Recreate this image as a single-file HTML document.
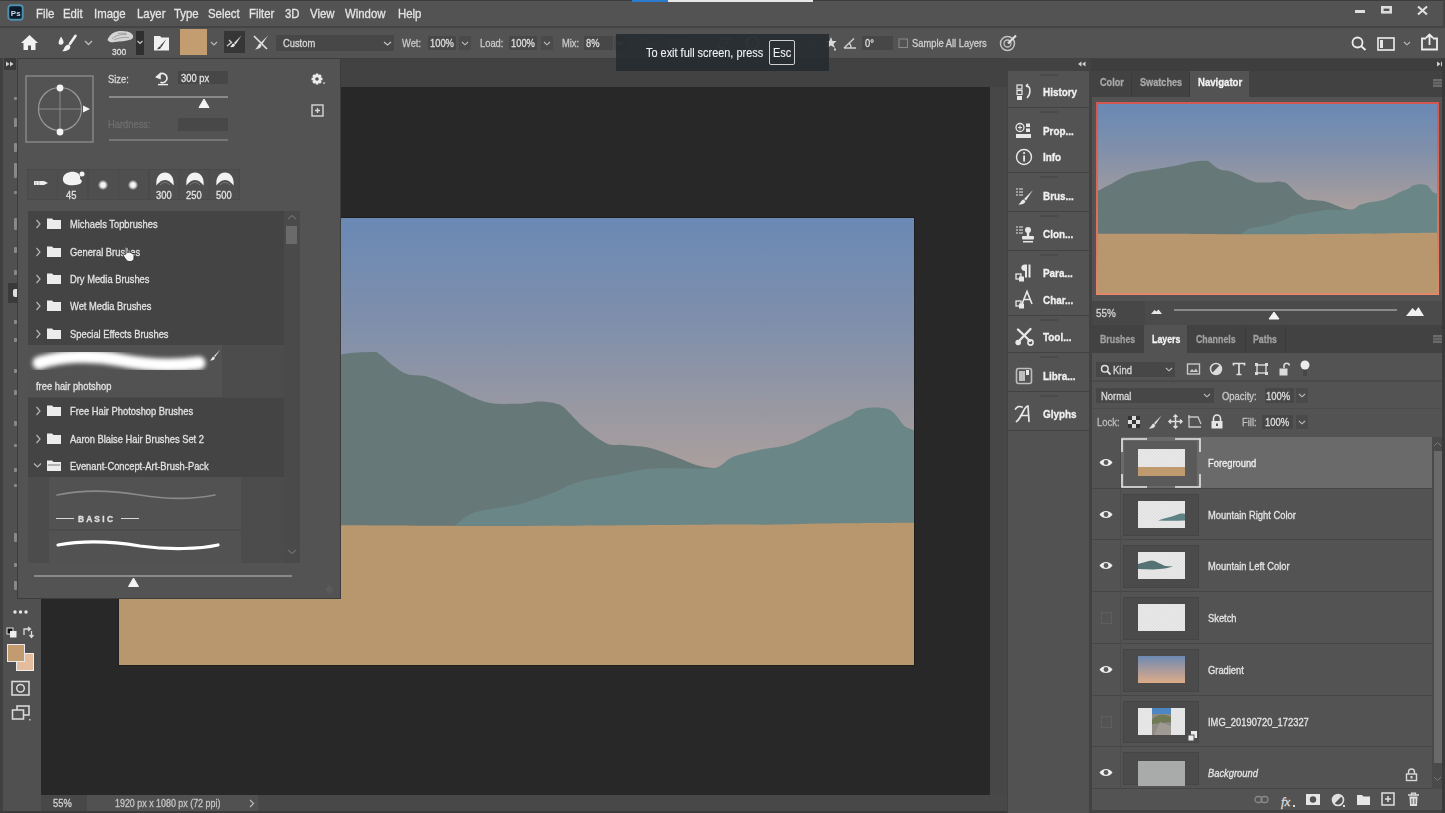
<!DOCTYPE html>
<html><head><meta charset="utf-8">
<style>
*{margin:0;padding:0;box-sizing:border-box}
html,body{width:1445px;height:813px;overflow:hidden;background:#535353;font-family:"Liberation Sans",sans-serif;color:#dcdcdc}
.a{position:absolute}
.t{position:absolute;white-space:nowrap;line-height:1;transform-origin:0 0;-webkit-text-stroke:0.3px currentColor}
svg{position:absolute;overflow:visible}
</style></head><body>
<div class="a" style="left:0px;top:0px;width:1445px;height:27px;background:#535353;"></div>
<div class="a" style="left:0px;top:0px;width:1445px;height:1px;background:#3c3c3c;"></div>
<div class="a" style="left:1443px;top:0px;width:2px;height:58px;background:#444444;"></div>
<div class="a" style="left:0px;top:26px;width:1445px;height:2px;background:#444444;"></div>
<div class="a" style="left:632px;top:0px;width:36px;height:2px;background:#2a7bd0;"></div>
<div class="a" style="left:668px;top:0px;width:145px;height:2px;background:#e8e8e8;"></div>
<div class="a" style="left:0px;top:28px;width:1445px;height:30px;background:#535353;"></div>
<div class="a" style="left:0px;top:58px;width:1445px;height:1px;background:#3e3e3e;"></div>
<div class="a" style="left:0px;top:58px;width:41px;height:755px;background:#535353;"></div>
<div class="a" style="left:0px;top:58px;width:3px;height:755px;background:#404040;"></div>
<div class="a" style="left:3px;top:58px;width:38px;height:755px;background:#505050;"></div>
<div class="a" style="left:41px;top:59px;width:966px;height:28px;background:#424242;"></div>
<div class="a" style="left:41px;top:87px;width:949px;height:708px;background:#282828;"></div>
<div class="a" style="left:990px;top:87px;width:17px;height:708px;background:#474747;"></div>
<div class="a" style="left:41px;top:795px;width:966px;height:16px;background:#484848;"></div>
<div class="a" style="left:87px;top:795px;width:171px;height:16px;background:#515151;"></div>
<div class="a" style="left:0px;top:811px;width:1445px;height:2px;background:#3a3a3a;"></div>
<svg style="left:0;top:0" width="1445" height="813" viewBox="0 0 1445 813">
<defs>
<linearGradient id="sky" x1="0" y1="0" x2="0" y2="1">
<stop offset="0" stop-color="#6a89b5"/>
<stop offset="0.35" stop-color="#7f8fab"/>
<stop offset="0.6" stop-color="#9597a3"/>
<stop offset="0.83" stop-color="#aa9f9d"/>
<stop offset="1" stop-color="#b4a49a"/>
</linearGradient>
<g id="art">
<rect x="119" y="218" width="795" height="300" fill="url(#sky)"/>
<path d="M119.0 423.0 C124.2 420.3 136.7 413.8 150.0 407.0 C163.3 400.2 180.7 388.0 199.0 382.0 C217.3 376.0 241.7 374.3 260.0 371.0 C278.3 367.7 295.5 364.8 309.0 362.0 C322.5 359.2 330.6 356.0 341.0 354.4 C351.4 352.8 365.0 352.1 371.5 352.1 C378.0 352.1 376.1 352.1 379.8 354.4 C383.5 356.7 389.1 362.7 393.7 366.0 C398.3 369.3 402.0 372.6 407.5 374.3 C413.0 376.1 420.0 374.6 426.9 376.5 C433.8 378.4 441.1 381.8 449.0 385.4 C456.9 388.9 466.6 394.8 474.0 397.8 C481.4 400.8 485.0 402.5 493.3 403.4 C501.6 404.3 515.9 403.7 523.8 403.4 C531.6 403.1 534.4 401.2 540.4 401.4 C546.4 401.6 554.7 402.5 559.8 404.7 C564.9 406.9 566.6 410.5 570.8 414.4 C574.9 418.3 578.7 423.4 584.7 428.3 C590.7 433.2 600.3 440.7 606.8 443.5 C613.2 446.3 616.5 444.2 623.4 444.9 C630.3 445.6 640.0 445.8 648.3 447.6 C656.6 449.5 665.0 453.0 673.3 456.0 C681.6 459.0 691.2 463.5 698.2 465.6 C705.2 467.7 712.2 468.0 715.0 468.5 L716 540 L119 540 Z" fill="#667878"/><path d="M454.6 526.0 C457.8 523.8 463.4 516.3 474.0 512.7 C484.6 509.1 505.3 507.6 518.2 504.4 C531.1 501.2 541.4 497.1 551.5 493.3 C561.6 489.5 567.6 484.9 579.1 481.7 C590.6 478.5 608.7 476.2 620.7 474.0 C632.7 471.8 639.6 469.5 651.1 468.6 C662.6 467.7 679.1 468.5 689.9 468.4 C700.7 468.3 709.1 469.4 715.7 467.8 C722.3 466.2 725.5 460.9 729.5 458.7 C733.5 456.5 734.5 456.3 739.4 454.8 C744.3 453.3 751.8 451.4 759.0 449.9 C766.2 448.4 776.1 447.5 782.7 446.0 C789.3 444.5 792.5 443.5 798.4 441.0 C804.3 438.5 812.1 434.1 818.0 431.2 C823.9 428.2 828.6 425.8 833.9 423.3 C839.2 420.8 845.7 418.5 849.6 416.4 C853.5 414.3 853.6 412.0 857.5 410.5 C861.4 409.0 868.0 407.8 873.2 407.6 C878.5 407.4 885.0 408.0 889.0 409.5 C893.0 411.0 894.3 413.6 896.9 416.4 C899.5 419.2 901.9 424.0 904.7 426.3 C907.6 428.6 912.5 429.6 914.0 430.2 L914 540 L454 540 Z" fill="#6b8687"/><path d="M119.0 525.0 C156.0 525.0 273.5 525.0 341.0 525.2 C408.5 525.4 459.0 526.1 523.8 526.0 C588.6 525.9 689.1 524.8 730.0 524.6 C770.9 524.4 751.0 524.9 769.0 524.7 C787.0 524.5 813.6 523.6 837.8 523.3 C862.0 523.0 901.3 522.8 914.0 522.7 L914 665 L119 665 Z" fill="#b8976e"/>
</g>
</defs>
<rect x="118" y="217" width="797" height="449" fill="#1e1e1e"/>
<use href="#art"/>
</svg>
<div class="a" style="left:1007px;top:58px;width:85px;height:755px;background:#424242;"></div>
<div class="a" style="left:1008px;top:71px;width:81px;height:742px;background:#4c4c4c;"></div>
<div class="a" style="left:1091px;top:58px;width:354px;height:755px;background:#424242;"></div>
<div class="a" style="left:1091px;top:59px;width:354px;height:12px;background:#3e3e3e;"></div>
<svg style="left:7px;top:4px;filter:blur(0.25px)" width="17" height="17" viewBox="0 0 17 17"><rect x="1.3" y="1.3" width="14.4" height="14.4" rx="2.8" fill="#0a1a2a" stroke="#4f90ad" stroke-width="1.9"/><text x="3.8" y="12" font-family="Liberation Sans" font-weight="bold" font-size="8" fill="#c6def0">Ps</text></svg>
<div class="t" style="left:35.5px;top:7.92px;font-size:12.8px;color:#e4e4e4;font-weight:normal;transform:scaleX(0.89);">File</div>
<div class="t" style="left:63px;top:7.92px;font-size:12.8px;color:#e4e4e4;font-weight:normal;transform:scaleX(0.89);">Edit</div>
<div class="t" style="left:94px;top:7.92px;font-size:12.8px;color:#e4e4e4;font-weight:normal;transform:scaleX(0.89);">Image</div>
<div class="t" style="left:136.5px;top:7.92px;font-size:12.8px;color:#e4e4e4;font-weight:normal;transform:scaleX(0.89);">Layer</div>
<div class="t" style="left:174px;top:7.92px;font-size:12.8px;color:#e4e4e4;font-weight:normal;transform:scaleX(0.89);">Type</div>
<div class="t" style="left:208px;top:7.92px;font-size:12.8px;color:#e4e4e4;font-weight:normal;transform:scaleX(0.89);">Select</div>
<div class="t" style="left:249px;top:7.92px;font-size:12.8px;color:#e4e4e4;font-weight:normal;transform:scaleX(0.89);">Filter</div>
<div class="t" style="left:285px;top:7.92px;font-size:12.8px;color:#e4e4e4;font-weight:normal;transform:scaleX(0.89);">3D</div>
<div class="t" style="left:310px;top:7.92px;font-size:12.8px;color:#e4e4e4;font-weight:normal;transform:scaleX(0.89);">View</div>
<div class="t" style="left:344.5px;top:7.92px;font-size:12.8px;color:#e4e4e4;font-weight:normal;transform:scaleX(0.89);">Window</div>
<div class="t" style="left:397.5px;top:7.92px;font-size:12.8px;color:#e4e4e4;font-weight:normal;transform:scaleX(0.89);">Help</div>
<div class="a" style="left:1355px;top:10px;width:10px;height:3px;background:#e0e0e0;"></div>
<svg style="left:1381px;top:6px;" width="11" height="8" viewBox="0 0 11 8"><rect x="1.3" y="1.3" width="8.4" height="5" fill="none" stroke="#dcdcdc" stroke-width="2.6"/></svg>
<svg style="left:1416px;top:5px;" width="13" height="11" viewBox="0 0 13 11"><path d="M2 1.5 L11 9.5 M11 1.5 L2 9.5" stroke="#e0e0e0" stroke-width="2.1"/></svg>
<svg style="left:20px;top:34px;" width="20" height="17" viewBox="0 0 20 17"><path d="M1 9 L9.5 1 L18 9 L15.5 9 L15.5 16 L11 16 L11 11.5 L8 11.5 L8 16 L3.5 16 L3.5 9 Z" fill="#f2f2f2"/></svg>
<svg style="left:56px;top:34px;" width="24" height="18" viewBox="0 0 24 18"><path d="M5 2.5 C6.5 5.5 8.5 7.5 7 9.8 C6 11.3 3.3 11.2 2.7 9.5 C2.2 8 3.5 5.5 5 2.5Z" fill="#f0f0f0"/><path d="M19.5 1.8 L14 9.8" stroke="#f0f0f0" stroke-width="2.6" stroke-linecap="round"/><path d="M12.6 10.6 C10 10.6 8.8 13 7.8 15 C7.4 16 6.8 16.8 6.2 17.3 C9.5 17.6 13.5 16.3 14.2 13.5 C14.5 12.3 13.8 11 12.6 10.6Z" fill="#f0f0f0"/></svg>
<svg style="left:84px;top:40px;" width="10" height="6" viewBox="0 0 10 6"><path d="M1 1 L4.5 4.5 L8 1" fill="none" stroke="#bdbdbd" stroke-width="1.3"/></svg>
<svg style="left:106px;top:29px;filter:blur(0.3px)" width="29" height="16" viewBox="0 0 29 16"><path d="M1.5 11 C3 7 6 3.5 11 2.5 C16 1.5 22 2 25.5 4.5 C28 6.5 27.5 9.5 25 10.5 C20 12.5 14 12 9 13 C6 13.5 3 13.5 1.5 11Z" fill="#d4d4d4"/><path d="M6 10 C9 7 14 5 20 5.5 M8 11 C12 9 17 8 23 8.5 M12 4.5 C15 4 18 4 21 5" stroke="#9a9a9a" stroke-width="0.9" fill="none"/></svg>
<div class="t" style="left:112px;top:47.42px;font-size:9.5px;color:#e0e0e0;font-weight:normal;transform:scaleX(0.89);">300</div>
<div class="a" style="left:136px;top:31px;width:8px;height:24px;background:#2f2f2f;"></div>
<svg style="left:137px;top:40px;" width="6" height="5" viewBox="0 0 6 5"><path d="M0.5 1 L3 3.5 L5.5 1" fill="none" stroke="#cfcfcf" stroke-width="1.1"/></svg>
<svg style="left:152px;top:34px;" width="20" height="18" viewBox="0 0 20 18"><path d="M2 2 L8 2 L9.5 3.5 L17 3.5 L17 16.5 L2 16.5Z" fill="#f0f0f0"/><path d="M14.5 5 L8 12 L9.3 13.2Z M7.8 12.5 C6 13 6.5 14.5 4.8 15.2 C7.5 15.5 9.3 14.5 9 13.3Z" fill="#3a3a3a"/></svg>
<div class="a" style="left:180px;top:29px;width:27px;height:26px;background:#c39c70;"></div>
<svg style="left:210px;top:41px;" width="8" height="5" viewBox="0 0 8 5"><path d="M1 1 L4 4 L7 1" fill="none" stroke="#bdbdbd" stroke-width="1.1"/></svg>
<div class="a" style="left:224px;top:31px;width:21px;height:22px;background:#363636;"></div>
<svg style="left:226px;top:34px;" width="18" height="16" viewBox="0 0 18 16"><path d="M15.5 1.5 L8 9 L9.5 10.5Z" fill="#e8e8e8"/><path d="M7.5 9.5 C5.5 10 6 12 4 13 C7 13.5 9 12.5 9 10.8Z" fill="#e8e8e8"/><path d="M1 12 L6 8 M3 6 L6 9" stroke="#d0d0d0" stroke-width="1.3"/></svg>
<svg style="left:252px;top:34px;" width="18" height="18" viewBox="0 0 18 18"><path d="M2 2 L15 15" stroke="#e0e0e0" stroke-width="1.6"/><path d="M16 1.5 L8.5 9 L10 10.5Z" fill="#e0e0e0"/><path d="M8 9.5 C6 10 6.5 12.5 3 15.5 C7.5 15 9.5 13 9.5 11Z" fill="#e0e0e0"/></svg>
<div class="a" style="left:276px;top:35px;width:118px;height:16px;background:#474747;"></div>
<div class="t" style="left:283px;top:38.38px;font-size:10.5px;color:#d8d8d8;font-weight:normal;transform:scaleX(0.89);">Custom</div>
<svg style="left:383px;top:41px;" width="9" height="5" viewBox="0 0 9 5"><path d="M1 1 L4.5 4 L8 1" fill="none" stroke="#c8c8c8" stroke-width="1.1"/></svg>
<div class="t" style="left:402px;top:38.38px;font-size:10.5px;color:#c8c8c8;font-weight:normal;transform:scaleX(0.89);">Wet:</div>
<div class="a" style="left:428px;top:36px;width:28px;height:14px;background:#474747;"></div>
<div class="t" style="left:430px;top:38.38px;font-size:10.5px;color:#dedede;font-weight:normal;transform:scaleX(0.89);">100%</div>
<div class="a" style="left:459px;top:36px;width:12px;height:14px;background:#4a4a4a;"></div>
<svg style="left:461px;top:41px;" width="9" height="5" viewBox="0 0 9 5"><path d="M1 1 L4 3.8 L7 1" fill="none" stroke="#bcbcbc" stroke-width="1.1"/></svg>
<div class="t" style="left:480px;top:38.38px;font-size:10.5px;color:#c8c8c8;font-weight:normal;transform:scaleX(0.89);">Load:</div>
<div class="a" style="left:509px;top:36px;width:28px;height:14px;background:#474747;"></div>
<div class="t" style="left:511px;top:38.38px;font-size:10.5px;color:#dedede;font-weight:normal;transform:scaleX(0.89);">100%</div>
<div class="a" style="left:541px;top:36px;width:12px;height:14px;background:#4a4a4a;"></div>
<svg style="left:543px;top:41px;" width="9" height="5" viewBox="0 0 9 5"><path d="M1 1 L4 3.8 L7 1" fill="none" stroke="#bcbcbc" stroke-width="1.1"/></svg>
<div class="t" style="left:562px;top:38.38px;font-size:10.5px;color:#c8c8c8;font-weight:normal;transform:scaleX(0.89);">Mix:</div>
<div class="a" style="left:584px;top:36px;width:29px;height:14px;background:#474747;"></div>
<div class="t" style="left:586px;top:38.38px;font-size:10.5px;color:#dedede;font-weight:normal;transform:scaleX(0.89);">8%</div>
<div class="a" style="left:614px;top:36px;width:12px;height:14px;background:#4a4a4a;"></div>
<svg style="left:616px;top:41px;" width="9" height="5" viewBox="0 0 9 5"><path d="M1 1 L4 3.8 L7 1" fill="none" stroke="#bcbcbc" stroke-width="1.1"/></svg>
<div class="t" style="left:640px;top:38.38px;font-size:10.5px;color:#6c6c6c;font-weight:normal;transform:scaleX(0.89);">Flow:</div>
<div class="t" style="left:667px;top:38.38px;font-size:10.5px;color:#6c6c6c;font-weight:normal;transform:scaleX(0.89);">100%</div>
<svg style="left:700px;top:41px;" width="9" height="5" viewBox="0 0 9 5"><path d="M1 1 L4 3.8 L7 1" fill="none" stroke="#6a6a6a" stroke-width="1.1"/></svg>
<svg style="left:716px;top:35px;" width="18" height="16" viewBox="0 0 18 16"><path d="M16 2 L8 10 M9 13 C5 14 3 12 2 9 M4 5 C6 3 9 3 11 4" fill="none" stroke="#7a7a7a" stroke-width="2"/></svg>
<svg style="left:744px;top:35px;" width="17" height="16" viewBox="0 0 17 16"><circle cx="8.5" cy="8" r="6" fill="none" stroke="#7a7a7a" stroke-width="2.2"/></svg>
<svg style="left:806px;top:41px;" width="9" height="5" viewBox="0 0 9 5"><path d="M1 1 L4 3.8 L7 1" fill="none" stroke="#6a6a6a" stroke-width="1.1"/></svg>
<svg style="left:824px;top:36px;" width="14" height="16" viewBox="0 0 14 16"><path d="M7 1 L8.5 5 L12.5 5 L9.5 8 L11 12 L7 9.5 L3 12 L4.5 8 L1.5 5 L5.5 5Z" fill="#d8d8d8"/><rect x="10" y="12.5" width="2" height="2" fill="#cfcfcf"/></svg>
<svg style="left:843px;top:37px;" width="15" height="12" viewBox="0 0 15 12"><path d="M1 11 L13 11 M1 11 L11 1.5 M8 11 C8 8.5 7 6.5 5.5 6" fill="none" stroke="#d0d0d0" stroke-width="1.4"/></svg>
<div class="a" style="left:862px;top:36px;width:31px;height:14px;background:#474747;"></div>
<div class="t" style="left:865px;top:38.38px;font-size:10.5px;color:#dedede;font-weight:normal;transform:scaleX(0.89);">0°</div>
<svg style="left:898px;top:38px;" width="11" height="11" viewBox="0 0 11 11"><rect x="1" y="1" width="8.5" height="8.5" fill="none" stroke="#8a8a8a" stroke-width="1"/></svg>
<div class="t" style="left:912px;top:38.38px;font-size:10.5px;color:#cfcfcf;font-weight:normal;transform:scaleX(0.89);">Sample All Layers</div>
<svg style="left:999px;top:34px;" width="19" height="18" viewBox="0 0 19 18"><circle cx="8.5" cy="9.5" r="7" fill="none" stroke="#c4c4c4" stroke-width="1.5"/><circle cx="8.5" cy="9.5" r="3.5" fill="none" stroke="#c4c4c4" stroke-width="1.3"/><path d="M17 1.5 L9 9.5" stroke="#e0e0e0" stroke-width="2.2"/></svg>
<svg style="left:1351px;top:36px;" width="17" height="15" viewBox="0 0 17 15"><circle cx="6.5" cy="6.5" r="5" fill="none" stroke="#ececec" stroke-width="1.8"/><path d="M10 10 L14.5 14" stroke="#ececec" stroke-width="2"/></svg>
<svg style="left:1377px;top:37px;" width="19" height="14" viewBox="0 0 19 14"><rect x="1" y="1" width="16" height="12" fill="none" stroke="#e6e6e6" stroke-width="1.7"/><rect x="3" y="3" width="3" height="8" fill="#e6e6e6"/></svg>
<svg style="left:1403px;top:41px;" width="8" height="5" viewBox="0 0 8 5"><path d="M1 1 L4 3.8 L7 1" fill="none" stroke="#bcbcbc" stroke-width="1.1"/></svg>
<svg style="left:1420px;top:33px;" width="19" height="18" viewBox="0 0 19 18"><path d="M6 5.5 L2 5.5 L2 16.5 L17 16.5 L17 5.5 L13 5.5" fill="none" stroke="#ececec" stroke-width="1.8"/><path d="M9.5 12 L9.5 2 M6 5 L9.5 1.5 L13 5" fill="none" stroke="#ececec" stroke-width="1.8"/></svg>
<div class="a" style="left:616px;top:34px;width:213px;height:37px;background:rgba(38,43,49,0.9);"></div>
<div class="t" style="left:646px;top:46.80px;font-size:12px;color:#f2f2f2;font-weight:normal;transform:scaleX(0.91);-webkit-text-stroke:0.1px #f2f2f2">To exit full screen, press</div>
<div class="a" style="left:769px;top:40px;width:26px;height:25px;background:transparent;border:1px solid #d0d0d0;border-radius:2px"></div>
<div class="t" style="left:773px;top:46.80px;font-size:12px;color:#f2f2f2;font-weight:normal;transform:scaleX(0.91);-webkit-text-stroke:0.1px #f2f2f2">Esc</div>
<div class="a" style="left:4px;top:58px;width:12px;height:12px;background:#3a3a3a;"></div>
<svg style="left:5px;top:61px;" width="10" height="6" viewBox="0 0 10 6"><path d="M1 0.5 L4.5 3 L1 5.5Z M5 0.5 L8.5 3 L5 5.5Z" fill="#d0d0d0"/></svg>
<div class="a" style="left:14px;top:97px;width:2.5px;height:3px;background:#b8b8b8;opacity:.55;border-radius:1px"></div>
<div class="a" style="left:14px;top:118px;width:2.5px;height:9px;background:#b8b8b8;opacity:.55;border-radius:1px"></div>
<div class="a" style="left:14px;top:143px;width:2.5px;height:9px;background:#b8b8b8;opacity:.55;border-radius:1px"></div>
<div class="a" style="left:14px;top:163px;width:2.5px;height:15px;background:#b8b8b8;opacity:.55;border-radius:1px"></div>
<div class="a" style="left:14px;top:191px;width:2.5px;height:3px;background:#b8b8b8;opacity:.55;border-radius:1px"></div>
<div class="a" style="left:14px;top:218px;width:2.5px;height:12px;background:#b8b8b8;opacity:.55;border-radius:1px"></div>
<div class="a" style="left:14px;top:247px;width:2.5px;height:6px;background:#b8b8b8;opacity:.55;border-radius:1px"></div>
<div class="a" style="left:14px;top:270px;width:2.5px;height:5px;background:#b8b8b8;opacity:.55;border-radius:1px"></div>
<div class="a" style="left:14px;top:320px;width:2.5px;height:4px;background:#b8b8b8;opacity:.55;border-radius:1px"></div>
<div class="a" style="left:14px;top:338px;width:2.5px;height:4px;background:#b8b8b8;opacity:.55;border-radius:1px"></div>
<div class="a" style="left:14px;top:369px;width:2.5px;height:4px;background:#b8b8b8;opacity:.55;border-radius:1px"></div>
<div class="a" style="left:14px;top:390px;width:2.5px;height:5px;background:#b8b8b8;opacity:.55;border-radius:1px"></div>
<div class="a" style="left:14px;top:421px;width:2.5px;height:5px;background:#b8b8b8;opacity:.55;border-radius:1px"></div>
<div class="a" style="left:14px;top:444px;width:2.5px;height:3px;background:#b8b8b8;opacity:.55;border-radius:1px"></div>
<div class="a" style="left:14px;top:468px;width:2.5px;height:4px;background:#b8b8b8;opacity:.55;border-radius:1px"></div>
<div class="a" style="left:14px;top:484px;width:2.5px;height:3px;background:#b8b8b8;opacity:.55;border-radius:1px"></div>
<div class="a" style="left:14px;top:533px;width:2.5px;height:9px;background:#b8b8b8;opacity:.55;border-radius:1px"></div>
<div class="a" style="left:14px;top:563px;width:2.5px;height:4px;background:#b8b8b8;opacity:.55;border-radius:1px"></div>
<div class="a" style="left:14px;top:581px;width:2.5px;height:9px;background:#b8b8b8;opacity:.55;border-radius:1px"></div>
<div class="a" style="left:8px;top:283px;width:9px;height:20px;background:#3a3a3a;"></div>
<div class="a" style="left:13px;top:289px;width:4px;height:8px;background:#e0e0e0;border-radius:2px 0 0 2px"></div>
<svg style="left:12px;top:608px;" width="18" height="8" viewBox="0 0 18 8"><circle cx="3" cy="4" r="1.7" fill="#e6e6e6"/><circle cx="8.5" cy="4" r="1.7" fill="#e6e6e6"/><circle cx="14" cy="4" r="1.7" fill="#e6e6e6"/></svg>
<svg style="left:6px;top:627px;" width="12" height="13" viewBox="0 0 12 13"><rect x="1" y="1" width="6" height="6" fill="#111" stroke="#ddd" stroke-width="1"/><rect x="4" y="4" width="6.5" height="6.5" fill="#eee"/></svg>
<svg style="left:22px;top:626px;" width="12" height="14" viewBox="0 0 12 14"><path d="M2 9 L2 3 L8 3 M6 1 L8.5 3 L6 5 M9.5 5 L9.5 11 M7.5 9 L9.5 11.5 L11.5 9" fill="none" stroke="#dadada" stroke-width="1.3"/></svg>
<div class="a" style="left:16px;top:653px;width:18px;height:18px;background:#e6bd9c;border:1px solid #eeeeee"></div>
<div class="a" style="left:7px;top:644px;width:18px;height:18px;background:#c39b70;border:1px solid #e8e8e8"></div>
<svg style="left:11px;top:680px;" width="20" height="17" viewBox="0 0 20 17"><rect x="1" y="1.5" width="17" height="13.5" fill="none" stroke="#d8d8d8" stroke-width="1.6"/><circle cx="9.5" cy="8.2" r="3.8" fill="none" stroke="#d8d8d8" stroke-width="1.5"/></svg>
<svg style="left:11px;top:705px;" width="21" height="17" viewBox="0 0 21 17"><rect x="6" y="1" width="12" height="9" fill="none" stroke="#d8d8d8" stroke-width="1.6"/><rect x="1.5" y="5" width="11" height="9" fill="#535353" stroke="#d8d8d8" stroke-width="1.6"/><rect x="18" y="14" width="1.5" height="1.5" fill="#ccc"/></svg>
<div class="t" style="left:53px;top:798.08px;font-size:10.5px;color:#d0d0d0;font-weight:normal;transform:scaleX(0.89);">55%</div>
<div class="t" style="left:115px;top:798.50px;font-size:10px;color:#c4c4c4;font-weight:normal;transform:scaleX(0.89);">1920 px x 1080 px (72 ppi)</div>
<svg style="left:249px;top:799px;" width="6" height="9" viewBox="0 0 6 9"><path d="M1 1 L4.5 4.5 L1 8" fill="none" stroke="#bdbdbd" stroke-width="1.1"/></svg>
<div class="a" style="left:17px;top:58px;width:324px;height:541px;background:#535353;border:1px solid #3c3c3c"></div>
<svg style="left:25px;top:75px;" width="70" height="69" viewBox="0 0 70 69"><rect x="1" y="1" width="67" height="66" fill="none" stroke="#8e8e8e" stroke-width="1.3"/><circle cx="35" cy="34" r="21.5" fill="none" stroke="#9a9a9a" stroke-width="1.2"/><path d="M35 13 L35 56 M14 34 L56 34" stroke="#8a8a8a" stroke-width="1"/><circle cx="35" cy="13" r="3.4" fill="#f4f4f4"/><circle cx="35" cy="57" r="3.4" fill="#f4f4f4"/><path d="M58 30.5 L65 34 L58 37.5Z" fill="#f4f4f4"/></svg>
<div class="t" style="left:108px;top:74.38px;font-size:10.5px;color:#d8d8d8;font-weight:normal;transform:scaleX(0.89);">Size:</div>
<svg style="left:154px;top:71px;" width="16" height="15" viewBox="0 0 16 15"><path d="M6 3.2 A4.6 4.6 0 1 1 6.5 11.3" fill="none" stroke="#ececec" stroke-width="1.7"/><path d="M1 6.2 L6.8 1.2 L6.8 8.6Z" fill="#ececec"/><path d="M4 13.6 L14 13.6" stroke="#ececec" stroke-width="1.4"/></svg>
<div class="a" style="left:178px;top:71px;width:50px;height:13px;background:#474747;"></div>
<div class="t" style="left:181px;top:73.38px;font-size:10.5px;color:#e2e2e2;font-weight:normal;transform:scaleX(0.89);">300 px</div>
<div class="a" style="left:109px;top:96px;width:119px;height:2px;background:#8a8a8a;"></div>
<svg style="left:198px;top:98px;" width="12" height="11" viewBox="0 0 12 11"><path d="M6 1 L11 9.5 L1 9.5Z" fill="#f4f4f4" stroke="#f4f4f4" stroke-width="1" stroke-linejoin="round"/></svg>
<div class="t" style="left:108px;top:119.38px;font-size:10.5px;color:#6e6e6e;font-weight:normal;transform:scaleX(0.89);">Hardness:</div>
<div class="a" style="left:178px;top:118px;width:50px;height:13px;background:#484848;"></div>
<div class="a" style="left:109px;top:139px;width:119px;height:2px;background:#767676;"></div>
<svg style="left:311px;top:73px;" width="16" height="13" viewBox="0 0 16 13"><path d="M11.47 4.78 L11.47 7.22 L9.56 7.59 L9.64 7.39 L10.73 9.00 L9.00 10.73 L7.39 9.64 L7.59 9.56 L7.22 11.47 L4.78 11.47 L4.41 9.56 L4.61 9.64 L3.00 10.73 L1.27 9.00 L2.36 7.39 L2.44 7.59 L0.53 7.22 L0.53 4.78 L2.44 4.41 L2.36 4.61 L1.27 3.00 L3.00 1.27 L4.61 2.36 L4.41 2.44 L4.78 0.53 L7.22 0.53 L7.59 2.44 L7.39 2.36 L9.00 1.27 L10.73 3.00 L9.64 4.61 L9.56 4.41Z" fill="#ececec"/><circle cx="6" cy="6" r="1.8" fill="#535353"/><path d="M11.5 9.5 L14.5 9.5 L13 11.2Z" fill="#ddd"/></svg>
<svg style="left:311px;top:104px;" width="13" height="13" viewBox="0 0 13 13"><rect x="1" y="1" width="11" height="11" fill="none" stroke="#d8d8d8" stroke-width="1.4"/><path d="M6.5 4 L6.5 9 M4 6.5 L9 6.5" stroke="#d8d8d8" stroke-width="1.4"/></svg>
<div class="a" style="left:27px;top:169px;width:213px;height:31px;background:#4a4a4a;"></div>
<div class="a" style="left:28px;top:170px;width:29px;height:29px;background:#4f4f4f;"></div>
<div class="a" style="left:58px;top:170px;width:29px;height:29px;background:#4f4f4f;"></div>
<div class="a" style="left:89px;top:170px;width:29px;height:29px;background:#4f4f4f;"></div>
<div class="a" style="left:119px;top:170px;width:29px;height:29px;background:#4f4f4f;"></div>
<div class="a" style="left:150px;top:170px;width:29px;height:29px;background:#4f4f4f;"></div>
<div class="a" style="left:180px;top:170px;width:29px;height:29px;background:#4f4f4f;"></div>
<div class="a" style="left:210px;top:170px;width:29px;height:29px;background:#4f4f4f;"></div>
<svg style="left:33px;top:178px;" width="18" height="10" viewBox="0 0 18 10"><path d="M1 3 L11 3 L15 5 L11 7 L1 7 Z" fill="#eeeeee"/><path d="M3 3 L3 7 M6 3 L6 7" stroke="#9a9a9a" stroke-width="0.7"/></svg>
<svg style="left:58px;top:170px;" width="30" height="20" viewBox="0 0 30 20"><path d="M5 8 C6 3 12 1 17 2 C21 3 23 6 22 9 C26 11 23 15 17 15 C10 16 4 14 5 8Z" fill="#f2f2f2"/><circle cx="24" cy="4" r="2.5" fill="#f2f2f2"/></svg>
<div class="t" style="left:66px;top:189.57px;font-size:10.5px;color:#e2e2e2;font-weight:normal;transform:scaleX(0.89);">45</div>
<div class="a" style="left:98px;top:180px;width:10px;height:10px;border-radius:50%;background:radial-gradient(#f4f4f4 30%,rgba(240,240,240,0) 75%)"></div>
<div class="a" style="left:128px;top:180px;width:10px;height:10px;border-radius:50%;background:radial-gradient(#f4f4f4 30%,rgba(240,240,240,0) 75%)"></div>
<svg style="left:155px;top:171px;filter:blur(0.7px)" width="20" height="16" viewBox="0 0 20 16"><path d="M1.5 14.5 C0.5 7 4 1.5 10 1.5 C16 1.5 19.5 7 18.5 14.5 C16.5 12 13.5 9 10 9 C6.5 9 3.5 12 1.5 14.5Z" fill="#f2f2f2"/><path d="M5 14 C7 12 8.5 11.5 10 11.5 C11.5 11.5 13 12 15 14" fill="none" stroke="#777" stroke-width="1"/></svg>
<div class="t" style="left:156px;top:189.57px;font-size:10.5px;color:#e2e2e2;font-weight:normal;transform:scaleX(0.89);">300</div>
<svg style="left:185px;top:171px;filter:blur(0.7px)" width="20" height="16" viewBox="0 0 20 16"><path d="M1.5 14.5 C0.5 7 4 1.5 10 1.5 C16 1.5 19.5 7 18.5 14.5 C16.5 12 13.5 9 10 9 C6.5 9 3.5 12 1.5 14.5Z" fill="#f2f2f2"/><path d="M5 14 C7 12 8.5 11.5 10 11.5 C11.5 11.5 13 12 15 14" fill="none" stroke="#777" stroke-width="1"/></svg>
<div class="t" style="left:186px;top:189.57px;font-size:10.5px;color:#e2e2e2;font-weight:normal;transform:scaleX(0.89);">250</div>
<svg style="left:215px;top:171px;filter:blur(0.7px)" width="20" height="16" viewBox="0 0 20 16"><path d="M1.5 14.5 C0.5 7 4 1.5 10 1.5 C16 1.5 19.5 7 18.5 14.5 C16.5 12 13.5 9 10 9 C6.5 9 3.5 12 1.5 14.5Z" fill="#f2f2f2"/><path d="M5 14 C7 12 8.5 11.5 10 11.5 C11.5 11.5 13 12 15 14" fill="none" stroke="#777" stroke-width="1"/></svg>
<div class="t" style="left:216px;top:189.57px;font-size:10.5px;color:#e2e2e2;font-weight:normal;transform:scaleX(0.89);">500</div>
<div class="a" style="left:28px;top:211px;width:256px;height:134px;background:#444444;"></div>
<div class="a" style="left:284px;top:211px;width:16px;height:352px;background:#4a4a4a;"></div>
<svg style="left:35px;top:219px;" width="7" height="10" viewBox="0 0 7 10"><path d="M1.5 1 L5 5 L1.5 9" fill="none" stroke="#b4b4b4" stroke-width="1.2"/></svg>
<svg style="left:46px;top:217px;" width="17" height="13" viewBox="0 0 17 13"><path d="M1 1.5 L6 1.5 L7.5 3 L15 3 L15 12 L1 12Z" fill="#ececec"/></svg>
<div class="t" style="left:69.5px;top:219.07px;font-size:10.5px;color:#e2e2e2;font-weight:normal;transform:scaleX(0.89);">Michaels Topbrushes</div>
<svg style="left:35px;top:247px;" width="7" height="10" viewBox="0 0 7 10"><path d="M1.5 1 L5 5 L1.5 9" fill="none" stroke="#b4b4b4" stroke-width="1.2"/></svg>
<svg style="left:46px;top:245px;" width="17" height="13" viewBox="0 0 17 13"><path d="M1 1.5 L6 1.5 L7.5 3 L15 3 L15 12 L1 12Z" fill="#ececec"/></svg>
<div class="t" style="left:69.5px;top:247.07px;font-size:10.5px;color:#e2e2e2;font-weight:normal;transform:scaleX(0.89);">General Brushes</div>
<svg style="left:35px;top:274px;" width="7" height="10" viewBox="0 0 7 10"><path d="M1.5 1 L5 5 L1.5 9" fill="none" stroke="#b4b4b4" stroke-width="1.2"/></svg>
<svg style="left:46px;top:272px;" width="17" height="13" viewBox="0 0 17 13"><path d="M1 1.5 L6 1.5 L7.5 3 L15 3 L15 12 L1 12Z" fill="#ececec"/></svg>
<div class="t" style="left:69.5px;top:274.07px;font-size:10.5px;color:#e2e2e2;font-weight:normal;transform:scaleX(0.89);">Dry Media Brushes</div>
<svg style="left:35px;top:301px;" width="7" height="10" viewBox="0 0 7 10"><path d="M1.5 1 L5 5 L1.5 9" fill="none" stroke="#b4b4b4" stroke-width="1.2"/></svg>
<svg style="left:46px;top:299px;" width="17" height="13" viewBox="0 0 17 13"><path d="M1 1.5 L6 1.5 L7.5 3 L15 3 L15 12 L1 12Z" fill="#ececec"/></svg>
<div class="t" style="left:69.5px;top:301.07px;font-size:10.5px;color:#e2e2e2;font-weight:normal;transform:scaleX(0.89);">Wet Media Brushes</div>
<svg style="left:35px;top:329px;" width="7" height="10" viewBox="0 0 7 10"><path d="M1.5 1 L5 5 L1.5 9" fill="none" stroke="#b4b4b4" stroke-width="1.2"/></svg>
<svg style="left:46px;top:327px;" width="17" height="13" viewBox="0 0 17 13"><path d="M1 1.5 L6 1.5 L7.5 3 L15 3 L15 12 L1 12Z" fill="#ececec"/></svg>
<div class="t" style="left:69.5px;top:329.07px;font-size:10.5px;color:#e2e2e2;font-weight:normal;transform:scaleX(0.89);">Special Effects Brushes</div>
<svg style="left:122px;top:246px;" width="14" height="17" viewBox="0 0 14 17"><path d="M4 8 L4 2.5 C4 1.2 6 1.2 6 2.5 L6 7 L6 5.5 C6 4.5 8 4.5 8 5.5 L8 7 C8 6 10 6 10 7 L10 8 C10 7.2 12 7.2 12 8.2 L12 12 C12 14 10.5 15.5 8.5 15.5 L7 15.5 C5.5 15.5 4.5 14.5 3.5 13 L1.5 10 C1 9 2 8 3 8.5Z" fill="#f4f4f4" stroke="#222" stroke-width="0.8"/></svg>
<svg style="left:287px;top:214px;" width="10" height="6" viewBox="0 0 10 6"><path d="M1 5 L5 1.5 L9 5" fill="none" stroke="#6e6e6e" stroke-width="1.1"/></svg>
<div class="a" style="left:286px;top:226px;width:11px;height:18px;background:#6a6a6a;"></div>
<svg style="left:287px;top:549px;" width="10" height="6" viewBox="0 0 10 6"><path d="M1 1 L5 4.5 L9 1" fill="none" stroke="#6e6e6e" stroke-width="1.1"/></svg>
<div class="a" style="left:28px;top:345px;width:194px;height:52px;background:#525252;"></div>
<div class="a" style="left:222px;top:345px;width:62px;height:52px;background:#4c4c4c;"></div>
<svg style="left:0;top:0" width="1445" height="813" viewBox="0 0 1445 813"><defs><filter id="bl" x="-20%" y="-50%" width="140%" height="200%"><feGaussianBlur stdDeviation="2.2"/></filter></defs><path d="M39 363 C60 356 90 354 120 360 C150 366 175 366 199 363" fill="none" stroke="#ffffff" stroke-width="13" stroke-linecap="round" filter="url(#bl)"/></svg>
<svg style="left:208px;top:348px;" width="14" height="14" viewBox="0 0 14 14"><path d="M12.5 1.5 L6 8 L7 9Z" fill="#e8e8e8"/><path d="M5.5 8.5 C3.5 9 4 11 2 12.5 C5 12.8 7 11.5 6.8 9.5Z" fill="#e8e8e8"/></svg>
<div class="t" style="left:36px;top:381.07px;font-size:10.5px;color:#e2e2e2;font-weight:normal;transform:scaleX(0.89);">free hair photshop</div>
<div class="a" style="left:28px;top:397px;width:256px;height:1px;background:#4a4a4a;"></div>
<div class="a" style="left:28px;top:398px;width:256px;height:79px;background:#444444;"></div>
<svg style="left:35px;top:406px;" width="7" height="10" viewBox="0 0 7 10"><path d="M1.5 1 L5 5 L1.5 9" fill="none" stroke="#b4b4b4" stroke-width="1.2"/></svg>
<svg style="left:46px;top:404px;" width="17" height="13" viewBox="0 0 17 13"><path d="M1 1.5 L6 1.5 L7.5 3 L15 3 L15 12 L1 12Z" fill="#ececec"/></svg>
<div class="t" style="left:69.5px;top:406.07px;font-size:10.5px;color:#e2e2e2;font-weight:normal;transform:scaleX(0.89);">Free Hair Photoshop Brushes</div>
<svg style="left:35px;top:434px;" width="7" height="10" viewBox="0 0 7 10"><path d="M1.5 1 L5 5 L1.5 9" fill="none" stroke="#b4b4b4" stroke-width="1.2"/></svg>
<svg style="left:46px;top:432px;" width="17" height="13" viewBox="0 0 17 13"><path d="M1 1.5 L6 1.5 L7.5 3 L15 3 L15 12 L1 12Z" fill="#ececec"/></svg>
<div class="t" style="left:69.5px;top:434.07px;font-size:10.5px;color:#e2e2e2;font-weight:normal;transform:scaleX(0.89);">Aaron Blaise Hair Brushes Set 2</div>
<svg style="left:33px;top:462px;" width="9" height="7" viewBox="0 0 9 7"><path d="M1 1.5 L4.5 5 L8 1.5" fill="none" stroke="#b4b4b4" stroke-width="1.2"/></svg>
<svg style="left:46px;top:459px;" width="17" height="13" viewBox="0 0 17 13"><path d="M1 1.5 L6 1.5 L7.5 3 L15 3 L15 12 L1 12Z" fill="#ececec"/><path d="M1.8 6 L14.2 6" stroke="#777" stroke-width="1"/></svg>
<div class="t" style="left:69.5px;top:461.07px;font-size:10.5px;color:#e2e2e2;font-weight:normal;transform:scaleX(0.89);">Evenant-Concept-Art-Brush-Pack</div>
<div class="a" style="left:28px;top:477px;width:256px;height:86px;background:#4c4c4c;"></div>
<div class="a" style="left:49px;top:477px;width:192px;height:52px;background:#525252;"></div>
<div class="a" style="left:49px;top:531px;width:192px;height:32px;background:#525252;"></div>
<svg style="left:0;top:0" width="1445" height="813" viewBox="0 0 1445 813"><path d="M57 495 C80 490 110 490 140 495 C170 500 195 499 215 495" fill="none" stroke="#8a8a8a" stroke-width="1.6" stroke-linecap="round"/><path d="M56 518.5 L74 518.5 M121 518.5 L139 518.5" stroke="#d6d6d6" stroke-width="1"/><path d="M58 545 C80 541 110 541 140 546 C170 550 200 549 218 545" fill="none" stroke="#ffffff" stroke-width="3.2" stroke-linecap="round"/></svg>
<div class="t" style="left:78px;top:514.42px;font-size:9.5px;color:#e0e0e0;font-weight:bold;transform:scaleX(0.89);">B A S I C</div>
<div class="a" style="left:34px;top:575px;width:258px;height:2px;background:#8a8a8a;"></div>
<svg style="left:127px;top:577px;" width="13" height="11" viewBox="0 0 13 11"><path d="M6.5 1 L11.5 9.5 L1.5 9.5Z" fill="#f4f4f4" stroke="#f4f4f4" stroke-width="1" stroke-linejoin="round"/></svg>
<svg style="left:324px;top:584px;" width="11" height="11" viewBox="0 0 11 11"><path d="M5.5 1 L10 5.5 L5.5 10 L1 5.5Z" fill="#5a5a5a"/></svg>
<svg style="left:1077px;top:61px;" width="10" height="6" viewBox="0 0 10 6"><path d="M4.5 0.5 L1 3 L4.5 5.5Z M8.5 0.5 L5 3 L8.5 5.5Z" fill="#d0d0d0"/></svg>
<svg style="left:1436px;top:61px;" width="10" height="6" viewBox="0 0 10 6"><path d="M1 0.5 L4.5 3 L1 5.5Z M5 0.5 L8.5 3 L5 5.5Z" fill="#d0d0d0"/></svg>
<div class="a" style="left:1008px;top:71px;width:81px;height:37px;background:#535353;border-bottom:1px solid #424242"></div>
<div class="a" style="left:1040px;top:74px;width:18px;height:2px;background:#4a4a4a;"></div>
<div class="a" style="left:1008px;top:108px;width:81px;height:65px;background:#535353;border-bottom:1px solid #424242"></div>
<div class="a" style="left:1040px;top:111px;width:18px;height:2px;background:#4a4a4a;"></div>
<div class="a" style="left:1008px;top:173px;width:81px;height:39px;background:#535353;border-bottom:1px solid #424242"></div>
<div class="a" style="left:1040px;top:176px;width:18px;height:2px;background:#4a4a4a;"></div>
<div class="a" style="left:1008px;top:212px;width:81px;height:39px;background:#535353;border-bottom:1px solid #424242"></div>
<div class="a" style="left:1040px;top:215px;width:18px;height:2px;background:#4a4a4a;"></div>
<div class="a" style="left:1008px;top:251px;width:81px;height:65px;background:#535353;border-bottom:1px solid #424242"></div>
<div class="a" style="left:1040px;top:254px;width:18px;height:2px;background:#4a4a4a;"></div>
<div class="a" style="left:1008px;top:316px;width:81px;height:37px;background:#535353;border-bottom:1px solid #424242"></div>
<div class="a" style="left:1040px;top:319px;width:18px;height:2px;background:#4a4a4a;"></div>
<div class="a" style="left:1008px;top:353px;width:81px;height:39px;background:#535353;border-bottom:1px solid #424242"></div>
<div class="a" style="left:1040px;top:356px;width:18px;height:2px;background:#4a4a4a;"></div>
<div class="a" style="left:1008px;top:392px;width:81px;height:39px;background:#535353;border-bottom:1px solid #424242"></div>
<div class="a" style="left:1040px;top:395px;width:18px;height:2px;background:#4a4a4a;"></div>
<div class="a" style="left:1008px;top:431px;width:81px;height:382px;background:#525252;"></div>
<svg style="left:1014px;top:82px;" width="22" height="20" viewBox="0 0 22 20"><rect x="3" y="3" width="5" height="4" fill="none" stroke="#e8e8e8" stroke-width="1.2"/><rect x="3" y="8.5" width="5" height="4" fill="none" stroke="#e8e8e8" stroke-width="1.2"/><rect x="3" y="14" width="5" height="4" fill="#e8e8e8"/><path d="M12 4 L14 2 M12 4 L15 5 M12.5 4 C17 4 17 12 13 16" fill="none" stroke="#e8e8e8" stroke-width="1.5"/></svg>
<div class="t" style="left:1043px;top:87.15px;font-size:11px;color:#f0f0f0;font-weight:bold;transform:scaleX(0.9);">History</div>
<svg style="left:1014px;top:121px;" width="22" height="20" viewBox="0 0 22 20"><circle cx="6" cy="6.5" r="4" fill="none" stroke="#e8e8e8" stroke-width="1.3"/><path d="M4 6.5 L8 6.5 M6 4.5 L6 8.5" stroke="#e8e8e8" stroke-width="1"/><rect x="12" y="2.5" width="4" height="3.5" fill="#e8e8e8"/><rect x="12" y="7.5" width="4" height="3.5" fill="#e8e8e8"/><rect x="2" y="13" width="15" height="4" fill="#e8e8e8"/></svg>
<div class="t" style="left:1043px;top:126.15px;font-size:11px;color:#f0f0f0;font-weight:bold;transform:scaleX(0.9);">Prop...</div>
<svg style="left:1014px;top:147px;" width="22" height="20" viewBox="0 0 22 20"><circle cx="10" cy="10" r="7.5" fill="none" stroke="#e8e8e8" stroke-width="1.4"/><rect x="9.2" y="8.5" width="1.8" height="6" fill="#e8e8e8"/><circle cx="10.1" cy="6" r="1.1" fill="#e8e8e8"/></svg>
<div class="t" style="left:1043px;top:152.15px;font-size:11px;color:#f0f0f0;font-weight:bold;transform:scaleX(0.9);">Info</div>
<svg style="left:1014px;top:186px;" width="22" height="20" viewBox="0 0 22 20"><path d="M2 3 L4 3 M5 3 L9 3 M2 6 L4 6 M5 6 L9 6 M2 9 L4 9 M5 9 L9 9" stroke="#e8e8e8" stroke-width="1"/><path d="M19 4 L10 13 L12 14.5Z" fill="#e8e8e8"/><path d="M9.5 13.5 C7 14 7 17 4 18.5 C8 19 11.5 17.5 11.3 15Z" fill="#e8e8e8"/></svg>
<div class="t" style="left:1043px;top:191.15px;font-size:11px;color:#f0f0f0;font-weight:bold;transform:scaleX(0.9);">Brus...</div>
<svg style="left:1014px;top:224px;" width="22" height="20" viewBox="0 0 22 20"><path d="M2 3 L4 3 M5 3 L9 3 M2 6 L4 6 M5 6 L9 6 M2 9 L4 9 M5 9 L9 9" stroke="#e8e8e8" stroke-width="1"/><circle cx="14" cy="6" r="3" fill="#e8e8e8"/><rect x="12.8" y="8" width="2.4" height="4" fill="#e8e8e8"/><rect x="8" y="12" width="12" height="3.5" rx="1" fill="#e8e8e8"/><rect x="9" y="17" width="10" height="1.5" fill="#e8e8e8"/></svg>
<div class="t" style="left:1043px;top:229.15px;font-size:11px;color:#f0f0f0;font-weight:bold;transform:scaleX(0.9);">Clon...</div>
<svg style="left:1014px;top:263px;" width="22" height="20" viewBox="0 0 22 20"><rect x="11" y="1.5" width="2" height="13" fill="#e8e8e8"/><rect x="14.5" y="1.5" width="2" height="13" fill="#e8e8e8"/><path d="M11 1.5 C6 1.5 6 8 11 8" fill="#e8e8e8"/><rect x="2" y="11" width="5" height="5" fill="none" stroke="#e8e8e8" stroke-width="1.3"/><rect x="5" y="13.5" width="5" height="5" fill="#e8e8e8"/></svg>
<div class="t" style="left:1043px;top:268.15px;font-size:11px;color:#f0f0f0;font-weight:bold;transform:scaleX(0.9);">Para...</div>
<svg style="left:1014px;top:290px;" width="22" height="20" viewBox="0 0 22 20"><path d="M8 14 L13 1.5 L18 14 M10 9.5 L16 9.5" fill="none" stroke="#e8e8e8" stroke-width="1.6"/><rect x="2" y="11" width="5" height="5" fill="none" stroke="#e8e8e8" stroke-width="1.3"/><rect x="5" y="13.5" width="5" height="5" fill="#e8e8e8"/></svg>
<div class="t" style="left:1043px;top:295.15px;font-size:11px;color:#f0f0f0;font-weight:bold;transform:scaleX(0.9);">Char...</div>
<svg style="left:1014px;top:327px;" width="22" height="20" viewBox="0 0 22 20"><path d="M4 2.5 L16 14 M16.5 2 L5 14" stroke="#e8e8e8" stroke-width="2.4" stroke-linecap="round"/><circle cx="4.2" cy="15.5" r="2.8" fill="#e8e8e8"/><circle cx="16.5" cy="15.5" r="2.6" fill="none" stroke="#e8e8e8" stroke-width="1.6"/></svg>
<div class="t" style="left:1043px;top:332.15px;font-size:11px;color:#f0f0f0;font-weight:bold;transform:scaleX(0.9);">Tool...</div>
<svg style="left:1014px;top:366px;" width="22" height="20" viewBox="0 0 22 20"><rect x="2.5" y="2.5" width="15" height="15" rx="2" fill="none" stroke="#bdbdbd" stroke-width="1.6"/><rect x="5" y="5" width="6" height="10" fill="#bdbdbd"/><rect x="12" y="4" width="3" height="5" fill="#e8e8e8"/></svg>
<div class="t" style="left:1043px;top:371.15px;font-size:11px;color:#f0f0f0;font-weight:bold;transform:scaleX(0.9);">Libra...</div>
<svg style="left:1014px;top:404px;" width="22" height="20" viewBox="0 0 22 20"><path d="M2.5 17.5 C5 16 7 12 9.5 7 C11 4 12.5 2 14 2 L15 17.5 M6.5 11.5 L14.5 11.5 M1.5 5 C3 2.5 6 2 8 3" fill="none" stroke="#e8e8e8" stroke-width="1.7" stroke-linecap="round"/></svg>
<div class="t" style="left:1043px;top:409.15px;font-size:11px;color:#f0f0f0;font-weight:bold;transform:scaleX(0.9);">Glyphs</div>
<div class="a" style="left:1092px;top:71px;width:350px;height:26px;background:#424242;"></div>
<div class="a" style="left:1190px;top:71px;width:59px;height:26px;background:#535353;"></div>
<div class="t" style="left:1100px;top:77.25px;font-size:11px;color:#a8a8a8;font-weight:bold;transform:scaleX(0.83);">Color</div>
<div class="t" style="left:1140px;top:77.25px;font-size:11px;color:#a8a8a8;font-weight:bold;transform:scaleX(0.83);">Swatches</div>
<div class="t" style="left:1198px;top:77.25px;font-size:11px;color:#f4f4f4;font-weight:bold;transform:scaleX(0.87);">Navigator</div>
<div class="a" style="left:1131px;top:73px;width:1px;height:24px;background:#3a3a3a;"></div>
<div class="a" style="left:1189px;top:73px;width:1px;height:24px;background:#3a3a3a;"></div>
<svg style="left:1433px;top:79px;" width="10" height="9" viewBox="0 0 10 9"><rect x="0" y="0" width="9" height="8" fill="#6a6a6a"/><path d="M0 2.7 L9 2.7 M0 5.3 L9 5.3" stroke="#4a4a4a" stroke-width="0.8"/></svg>
<div class="a" style="left:1092px;top:97px;width:350px;height:204px;background:#535353;"></div>
<div class="a" style="left:1096px;top:102px;width:343px;height:193px;background:linear-gradient(#d35850,#dc6c5c 50%,#e4876a);"></div>
<svg style="left:1098px;top:104px" width="339" height="189" viewBox="119 218 795 447" preserveAspectRatio="none"><use href="#art"/></svg>
<div class="a" style="left:1092px;top:301px;width:350px;height:24px;background:#4b4b4b;"></div>
<div class="a" style="left:1092px;top:301px;width:53px;height:24px;background:#474747;"></div>
<div class="t" style="left:1096px;top:307.65px;font-size:11px;color:#d4d4d4;font-weight:normal;transform:scaleX(0.9);">55%</div>
<svg style="left:1150px;top:308px;" width="13" height="7" viewBox="0 0 13 7"><path d="M1 6 L4.5 2 L6.5 3.5 L8.5 1.5 L12 6Z" fill="#e8e8e8"/></svg>
<div class="a" style="left:1174px;top:309px;width:223px;height:2px;background:#8a8a8a;"></div>
<svg style="left:1268px;top:311px;" width="12" height="9" viewBox="0 0 12 9"><path d="M6 1 L11 8 L1 8Z" fill="#f4f4f4" stroke="#f4f4f4" stroke-width="1" stroke-linejoin="round"/></svg>
<svg style="left:1405px;top:305px;" width="20" height="12" viewBox="0 0 20 12"><path d="M1 11 L7.5 3 L10.5 6 L13.5 2 L19 11Z" fill="#f0f0f0"/></svg>
<div class="a" style="left:1092px;top:325px;width:350px;height:28px;background:#424242;"></div>
<div class="a" style="left:1144px;top:325px;width:43px;height:28px;background:#535353;"></div>
<div class="t" style="left:1100px;top:333.65px;font-size:11px;color:#a0a0a0;font-weight:bold;transform:scaleX(0.8);">Brushes</div>
<div class="t" style="left:1152px;top:333.65px;font-size:11px;color:#f4f4f4;font-weight:bold;transform:scaleX(0.8);">Layers</div>
<div class="t" style="left:1196px;top:333.65px;font-size:11px;color:#a0a0a0;font-weight:bold;transform:scaleX(0.8);">Channels</div>
<div class="t" style="left:1253px;top:333.65px;font-size:11px;color:#a0a0a0;font-weight:bold;transform:scaleX(0.8);">Paths</div>
<div class="a" style="left:1245px;top:327px;width:1px;height:26px;background:#3a3a3a;"></div>
<div class="a" style="left:1285px;top:327px;width:1px;height:26px;background:#3a3a3a;"></div>
<svg style="left:1433px;top:335px;" width="10" height="9" viewBox="0 0 10 9"><rect x="0" y="0" width="9" height="8" fill="#6a6a6a"/><path d="M0 2.7 L9 2.7 M0 5.3 L9 5.3" stroke="#4a4a4a" stroke-width="0.8"/></svg>
<div class="a" style="left:1092px;top:353px;width:350px;height:84px;background:#535353;"></div>
<div class="a" style="left:1096px;top:362px;width:79px;height:15px;background:#474747;"></div>
<svg style="left:1100px;top:364px;" width="12" height="12" viewBox="0 0 12 12"><circle cx="4.8" cy="4.8" r="3.3" fill="none" stroke="#e0e0e0" stroke-width="1.5"/><path d="M7.2 7.2 L10.5 10.5" stroke="#e0e0e0" stroke-width="1.8"/></svg>
<div class="t" style="left:1113px;top:365.07px;font-size:10.5px;color:#d8d8d8;font-weight:normal;transform:scaleX(0.9);">Kind</div>
<svg style="left:1165px;top:367px;" width="9" height="5" viewBox="0 0 9 5"><path d="M1 1 L4 3.8 L7 1" fill="none" stroke="#bcbcbc" stroke-width="1.1"/></svg>
<svg style="left:1186px;top:362px;" width="16" height="14" viewBox="0 0 16 14"><rect x="1.5" y="2" width="12" height="10" fill="none" stroke="#c8c8c8" stroke-width="1.4"/><path d="M3.5 10 L6 7 L8 9 L10 6.5 L12 10Z" fill="#c8c8c8"/></svg>
<svg style="left:1209px;top:362px;" width="14" height="14" viewBox="0 0 14 14"><circle cx="7" cy="7" r="5.5" fill="none" stroke="#dcdcdc" stroke-width="1.5"/><path d="M7 1.5 A5.5 5.5 0 0 1 7 12.5Z" fill="#dcdcdc" transform="rotate(45 7 7)"/></svg>
<svg style="left:1232px;top:362px;" width="14" height="14" viewBox="0 0 14 14"><path d="M1.5 3.5 L1.5 1.5 L12.5 1.5 L12.5 3.5 M7 1.5 L7 12.5 M4.5 12.5 L9.5 12.5" fill="none" stroke="#e0e0e0" stroke-width="1.7"/></svg>
<svg style="left:1254px;top:362px;" width="15" height="14" viewBox="0 0 15 14"><rect x="3" y="3" width="9" height="8" fill="none" stroke="#dcdcdc" stroke-width="1.4"/><rect x="1" y="1" width="3" height="3" fill="#dcdcdc"/><rect x="11" y="1" width="3" height="3" fill="#dcdcdc"/><rect x="1" y="10" width="3" height="3" fill="#dcdcdc"/><rect x="11" y="10" width="3" height="3" fill="#dcdcdc"/></svg>
<svg style="left:1278px;top:362px;" width="13" height="14" viewBox="0 0 13 14"><path d="M6 6 L6 3.5 A2.8 2.8 0 0 1 11.5 3.5" fill="none" stroke="#dcdcdc" stroke-width="1.5"/><rect x="1.5" y="6.5" width="8" height="7" fill="#dcdcdc"/></svg>
<svg style="left:1299px;top:360px;" width="12" height="18" viewBox="0 0 12 18"><circle cx="6" cy="5" r="4.5" fill="#ececec"/><rect x="4" y="10" width="4" height="6" fill="#474747"/></svg>
<div class="a" style="left:1092px;top:380px;width:350px;height:2px;background:#4a4a4a;"></div>
<div class="a" style="left:1096px;top:388px;width:118px;height:15px;background:#474747;"></div>
<div class="t" style="left:1101px;top:390.57px;font-size:10.5px;color:#dcdcdc;font-weight:normal;transform:scaleX(0.9);">Normal</div>
<svg style="left:1203px;top:393px;" width="9" height="5" viewBox="0 0 9 5"><path d="M1 1 L4 3.8 L7 1" fill="none" stroke="#bcbcbc" stroke-width="1.1"/></svg>
<div class="t" style="left:1222px;top:391.07px;font-size:10.5px;color:#c8c8c8;font-weight:normal;transform:scaleX(0.9);">Opacity:</div>
<div class="a" style="left:1265px;top:388px;width:29px;height:15px;background:#474747;"></div>
<div class="t" style="left:1266px;top:390.57px;font-size:10.5px;color:#dedede;font-weight:normal;transform:scaleX(0.9);">100%</div>
<div class="a" style="left:1296px;top:388px;width:12px;height:15px;background:#4a4a4a;"></div>
<svg style="left:1298px;top:393px;" width="9" height="5" viewBox="0 0 9 5"><path d="M1 1 L4 3.8 L7 1" fill="none" stroke="#bcbcbc" stroke-width="1.1"/></svg>
<div class="a" style="left:1092px;top:408px;width:350px;height:1px;background:#4c4c4c;"></div>
<div class="t" style="left:1097px;top:417.07px;font-size:10.5px;color:#bdbdbd;font-weight:normal;transform:scaleX(0.9);">Lock:</div>
<svg style="left:1127px;top:415px;" width="14" height="14" viewBox="0 0 14 14"><rect x="1" y="1" width="12" height="12" fill="#dcdcdc"/><rect x="1" y="1" width="4" height="4" fill="#333"/><rect x="9" y="1" width="4" height="4" fill="#333"/><rect x="5" y="5" width="4" height="4" fill="#333"/><rect x="1" y="9" width="4" height="4" fill="#333"/><rect x="9" y="9" width="4" height="4" fill="#333"/></svg>
<svg style="left:1147px;top:414px;" width="16" height="16" viewBox="0 0 16 16"><path d="M14.5 1.5 L7 9 L8.5 10.5Z" fill="#e0e0e0"/><path d="M6.5 9.5 C4.5 10 5 12.5 1.5 14.5 C6 14.8 8.5 13 8.2 11Z" fill="#e0e0e0"/></svg>
<svg style="left:1168px;top:414px;" width="15" height="15" viewBox="0 0 15 15"><path d="M7.5 1 L7.5 14 M1 7.5 L14 7.5 M5.5 3 L7.5 1 L9.5 3 M5.5 12 L7.5 14 L9.5 12 M3 5.5 L1 7.5 L3 9.5 M12 5.5 L14 7.5 L12 9.5" fill="none" stroke="#dcdcdc" stroke-width="1.5"/></svg>
<svg style="left:1187px;top:414px;" width="16" height="15" viewBox="0 0 16 15"><path d="M2 1 L2 13 L14 13 M4 3 L11 3 L14 10 M1 3 L4 3" fill="none" stroke="#c8c8c8" stroke-width="1.3"/></svg>
<svg style="left:1210px;top:414px;" width="14" height="15" viewBox="0 0 14 15"><path d="M3.5 7 L3.5 4.5 A3.5 3.5 0 0 1 10.5 4.5 L10.5 7" fill="none" stroke="#e6e6e6" stroke-width="1.6"/><rect x="1.5" y="7" width="11" height="7.5" fill="#e6e6e6"/><rect x="6" y="9.5" width="2" height="2.5" fill="#535353"/></svg>
<div class="t" style="left:1242px;top:417.07px;font-size:10.5px;color:#bdbdbd;font-weight:normal;transform:scaleX(0.9);">Fill:</div>
<div class="a" style="left:1262px;top:415px;width:31px;height:14px;background:#474747;"></div>
<div class="t" style="left:1265px;top:417.07px;font-size:10.5px;color:#dedede;font-weight:normal;transform:scaleX(0.9);">100%</div>
<div class="a" style="left:1296px;top:415px;width:12px;height:14px;background:#4a4a4a;"></div>
<svg style="left:1298px;top:420px;" width="9" height="5" viewBox="0 0 9 5"><path d="M1 1 L4 3.8 L7 1" fill="none" stroke="#bcbcbc" stroke-width="1.1"/></svg>
<div class="a" style="left:1092px;top:437px;width:340px;height:352px;background:#535353;"></div>
<svg style="left:0;top:0;width:0;height:0"><defs>
<pattern id="chk" x="0" y="0" width="3" height="3" patternUnits="userSpaceOnUse"><rect width="3" height="3" fill="#ebebeb"/><rect width="1.5" height="1.5" fill="#dfdfdf"/><rect x="1.5" y="1.5" width="1.5" height="1.5" fill="#dfdfdf"/></pattern>
<linearGradient id="grd" x1="0" y1="0" x2="0" y2="1"><stop offset="0" stop-color="#6d8ab3"/><stop offset="0.5" stop-color="#a89a9c"/><stop offset="1" stop-color="#dcac88"/></linearGradient>
</defs></svg>
<div class="a" style="left:1092px;top:437px;width:340px;height:52px;background:#535353;"></div>
<div class="a" style="left:1120px;top:437px;width:312px;height:52px;background:#6a6a6a;"></div>
<div class="a" style="left:1092px;top:488px;width:340px;height:1px;background:#464646;"></div>
<div class="a" style="left:1120px;top:437px;width:1px;height:52px;background:#4c4c4c;"></div>
<svg style="left:1099px;top:457px;" width="14" height="11" viewBox="0 0 14 11"><path d="M0.5 5.5 C3.5 0.8 10.5 0.8 13.5 5.5 C10.5 10.2 3.5 10.2 0.5 5.5Z" fill="#f0f0f0"/><circle cx="7" cy="5.5" r="2.4" fill="#5a5a5a"/></svg>
<div class="a" style="left:1124px;top:441px;width:73px;height:45px;background:#5a5a5a;"></div>
<svg style="left:1121px;top:438px" width="80" height="50" viewBox="0 0 80 50"><path d="M1 14 L1 1 L26 1 M54 1 L79 1 L79 14 M79 36 L79 49 L54 49 M26 49 L1 49 L1 36" fill="none" stroke="#e6e6e6" stroke-width="1.6"/></svg>
<svg style="left:1138px;top:449px" width="47" height="27" viewBox="0 0 47 27"><rect width="47" height="27" fill="url(#chk)"/><rect y="18" width="47" height="9" fill="#bf9a6f"/></svg>
<div class="t" style="left:1208px;top:458.07px;font-size:10.5px;color:#f0f0f0;font-weight:normal;transform:scaleX(0.89);">Foreground</div>
<div class="a" style="left:1092px;top:489px;width:340px;height:51px;background:#535353;"></div>
<div class="a" style="left:1092px;top:539px;width:340px;height:1px;background:#464646;"></div>
<div class="a" style="left:1120px;top:489px;width:1px;height:51px;background:#4c4c4c;"></div>
<svg style="left:1099px;top:509px;" width="14" height="11" viewBox="0 0 14 11"><path d="M0.5 5.5 C3.5 0.8 10.5 0.8 13.5 5.5 C10.5 10.2 3.5 10.2 0.5 5.5Z" fill="#f0f0f0"/><circle cx="7" cy="5.5" r="2.4" fill="#5a5a5a"/></svg>
<div class="a" style="left:1123px;top:494px;width:76px;height:42px;background:#4b4b4b;border:1px solid #454545"></div>
<svg style="left:1138px;top:501px" width="47" height="27" viewBox="0 0 47 27"><rect width="47" height="27" fill="url(#chk)"/><path d="M20 19.5 C24 18 28 17 32 16 C36 15 38 14 41 13 C44 12.3 46 12.5 47 13 L47 19.5 C38 19.8 28 19.8 20 19.5Z" fill="#5f8286"/></svg>
<div class="t" style="left:1208px;top:510.07px;font-size:10.5px;color:#e4e4e4;font-weight:normal;transform:scaleX(0.89);">Mountain Right Color</div>
<div class="a" style="left:1092px;top:540px;width:340px;height:52px;background:#535353;"></div>
<div class="a" style="left:1092px;top:591px;width:340px;height:1px;background:#464646;"></div>
<div class="a" style="left:1120px;top:540px;width:1px;height:52px;background:#4c4c4c;"></div>
<svg style="left:1099px;top:560px;" width="14" height="11" viewBox="0 0 14 11"><path d="M0.5 5.5 C3.5 0.8 10.5 0.8 13.5 5.5 C10.5 10.2 3.5 10.2 0.5 5.5Z" fill="#f0f0f0"/><circle cx="7" cy="5.5" r="2.4" fill="#5a5a5a"/></svg>
<div class="a" style="left:1123px;top:545px;width:76px;height:43px;background:#4b4b4b;border:1px solid #454545"></div>
<svg style="left:1138px;top:552px" width="47" height="27" viewBox="0 0 47 27"><rect width="47" height="27" fill="url(#chk)"/><path d="M0 12 C5 11 10 8.5 14 8.5 C18 9 22 12 27 14 L35 14.5 C30 16 25 17 15 17.5 L0 17Z" fill="#557274"/></svg>
<div class="t" style="left:1208px;top:561.08px;font-size:10.5px;color:#e4e4e4;font-weight:normal;transform:scaleX(0.89);">Mountain Left Color</div>
<div class="a" style="left:1092px;top:592px;width:340px;height:52px;background:#535353;"></div>
<div class="a" style="left:1092px;top:643px;width:340px;height:1px;background:#464646;"></div>
<div class="a" style="left:1120px;top:592px;width:1px;height:52px;background:#4c4c4c;"></div>
<div class="a" style="left:1101px;top:612px;width:11px;height:12px;background:transparent;border:1px solid #5e5e5e"></div>
<div class="a" style="left:1123px;top:597px;width:76px;height:43px;background:#4b4b4b;border:1px solid #454545"></div>
<svg style="left:1138px;top:604px" width="47" height="27" viewBox="0 0 47 27"><rect width="47" height="27" fill="url(#chk)"/></svg>
<div class="t" style="left:1208px;top:613.08px;font-size:10.5px;color:#e4e4e4;font-weight:normal;transform:scaleX(0.89);">Sketch</div>
<div class="a" style="left:1092px;top:644px;width:340px;height:52px;background:#535353;"></div>
<div class="a" style="left:1092px;top:695px;width:340px;height:1px;background:#464646;"></div>
<div class="a" style="left:1120px;top:644px;width:1px;height:52px;background:#4c4c4c;"></div>
<svg style="left:1099px;top:664px;" width="14" height="11" viewBox="0 0 14 11"><path d="M0.5 5.5 C3.5 0.8 10.5 0.8 13.5 5.5 C10.5 10.2 3.5 10.2 0.5 5.5Z" fill="#f0f0f0"/><circle cx="7" cy="5.5" r="2.4" fill="#5a5a5a"/></svg>
<div class="a" style="left:1123px;top:649px;width:76px;height:43px;background:#4b4b4b;border:1px solid #454545"></div>
<svg style="left:1138px;top:656px" width="47" height="27" viewBox="0 0 47 27"><rect width="47" height="27" fill="url(#grd)"/></svg>
<div class="t" style="left:1208px;top:665.08px;font-size:10.5px;color:#e4e4e4;font-weight:normal;transform:scaleX(0.89);">Gradient</div>
<div class="a" style="left:1092px;top:696px;width:340px;height:51px;background:#535353;"></div>
<div class="a" style="left:1092px;top:746px;width:340px;height:1px;background:#464646;"></div>
<div class="a" style="left:1120px;top:696px;width:1px;height:51px;background:#4c4c4c;"></div>
<div class="a" style="left:1101px;top:716px;width:11px;height:12px;background:transparent;border:1px solid #5e5e5e"></div>
<div class="a" style="left:1123px;top:701px;width:76px;height:42px;background:#4b4b4b;border:1px solid #454545"></div>
<svg style="left:1138px;top:708px" width="47" height="27" viewBox="0 0 47 27"><rect width="47" height="27" fill="url(#chk)"/><rect x="14" y="0" width="19" height="27" fill="#8e8a86"/><rect x="14" y="0" width="19" height="6" fill="#4d86c0"/><path d="M14 12 C18 7 24 5 33 9 L33 14 L14 16Z" fill="#6f7a55"/><path d="M16 27 L22 14 L33 18 L33 27Z" fill="#a09a94"/></svg>
<svg style="left:1187px;top:730px;" width="12" height="12" viewBox="0 0 12 12"><rect x="4" y="1" width="6" height="7" fill="#ececec"/><rect x="1" y="5" width="6" height="6" fill="#ececec" stroke="#535353" stroke-width="1"/></svg>
<div class="t" style="left:1208px;top:717.08px;font-size:10.5px;color:#e4e4e4;font-weight:normal;transform:scaleX(0.89);">IMG_20190720_172327</div>
<div class="a" style="left:1092px;top:747px;width:340px;height:42px;background:#535353;"></div>
<div class="a" style="left:1092px;top:788px;width:340px;height:1px;background:#464646;"></div>
<div class="a" style="left:1120px;top:747px;width:1px;height:42px;background:#4c4c4c;"></div>
<svg style="left:1099px;top:767px;" width="14" height="11" viewBox="0 0 14 11"><path d="M0.5 5.5 C3.5 0.8 10.5 0.8 13.5 5.5 C10.5 10.2 3.5 10.2 0.5 5.5Z" fill="#f0f0f0"/><circle cx="7" cy="5.5" r="2.4" fill="#5a5a5a"/></svg>
<div class="a" style="left:1123px;top:752px;width:76px;height:33px;background:#4b4b4b;border:1px solid #454545"></div>
<div class="a" style="left:1138px;top:761px;width:47px;height:25px;background:#a9abab;"></div>
<div class="t" style="left:1208px;top:768.08px;font-size:10.5px;color:#e4e4e4;font-weight:normal;transform:scaleX(0.89);font-style:italic;">Background</div>
<svg style="left:1405px;top:768px;" width="13" height="13" viewBox="0 0 13 13"><path d="M3.5 6 L3.5 4 A3 3 0 0 1 9.5 4 L9.5 6" fill="none" stroke="#d8d8d8" stroke-width="1.4"/><rect x="1.5" y="6" width="10" height="6.5" fill="none" stroke="#d8d8d8" stroke-width="1.4"/><rect x="5.5" y="8" width="2" height="2.5" fill="#d8d8d8"/></svg>
<div class="a" style="left:1432px;top:437px;width:11px;height:352px;background:#4a4a4a;"></div>
<div class="a" style="left:1434px;top:451px;width:8px;height:312px;background:#696969;"></div>
<svg style="left:1433px;top:441px;" width="9" height="6" viewBox="0 0 9 6"><path d="M1 5 L4.5 1.5 L8 5" fill="none" stroke="#777" stroke-width="1"/></svg>
<svg style="left:1433px;top:776px;" width="9" height="6" viewBox="0 0 9 6"><path d="M1 1 L4.5 4.5 L8 1" fill="none" stroke="#777" stroke-width="1"/></svg>
<div class="a" style="left:1442px;top:58px;width:3px;height:755px;background:#3a3a3a;"></div>
<div class="a" style="left:1092px;top:789px;width:350px;height:21px;background:#535353;"></div>
<svg style="left:1254px;top:795px;" width="16" height="9" viewBox="0 0 16 9"><rect x="1" y="1.5" width="7" height="6" rx="3" fill="none" stroke="#8a8a8a" stroke-width="1.3"/><rect x="7" y="1.5" width="7" height="6" rx="3" fill="none" stroke="#8a8a8a" stroke-width="1.3"/></svg>
<div class="t" style="left:1281px;top:794.95px;font-size:13px;color:#dcdcdc;font-weight:normal;font-style:italic;font-family:Liberation Serif">fx</div>
<div class="a" style="left:1293px;top:805px;width:2px;height:2px;background:#dcdcdc;"></div>
<svg style="left:1305px;top:793px;" width="16" height="13" viewBox="0 0 16 13"><rect x="1" y="1" width="14" height="11" fill="#e6e6e6"/><circle cx="8" cy="6.5" r="3.2" fill="#535353"/></svg>
<svg style="left:1331px;top:793px;" width="15" height="15" viewBox="0 0 15 15"><circle cx="7" cy="7" r="5.5" fill="none" stroke="#e0e0e0" stroke-width="1.6"/><path d="M3.1 10.9 A5.5 5.5 0 0 1 10.9 3.1Z" fill="#e0e0e0"/><rect x="12" y="12" width="2" height="2" fill="#ddd"/></svg>
<svg style="left:1356px;top:793px;" width="15" height="13" viewBox="0 0 15 13"><path d="M1 2 L6 2 L7.5 3.5 L14 3.5 L14 12 L1 12Z" fill="#e6e6e6"/></svg>
<svg style="left:1381px;top:792px;" width="14" height="14" viewBox="0 0 14 14"><rect x="1" y="1" width="12" height="12" fill="none" stroke="#e0e0e0" stroke-width="1.5"/><path d="M7 4 L7 10 M4 7 L10 7" stroke="#e0e0e0" stroke-width="1.5"/></svg>
<svg style="left:1407px;top:792px;" width="13" height="15" viewBox="0 0 13 15"><path d="M1 3 L12 3 M4.5 3 L4.5 1.2 L8.5 1.2 L8.5 3" fill="none" stroke="#e0e0e0" stroke-width="1.3"/><path d="M2.5 4.5 L10.5 4.5 L10 14 L3 14Z" fill="#e0e0e0"/><path d="M5 6.5 L5 12 M8 6.5 L8 12" stroke="#535353" stroke-width="1"/></svg>
</body></html>
